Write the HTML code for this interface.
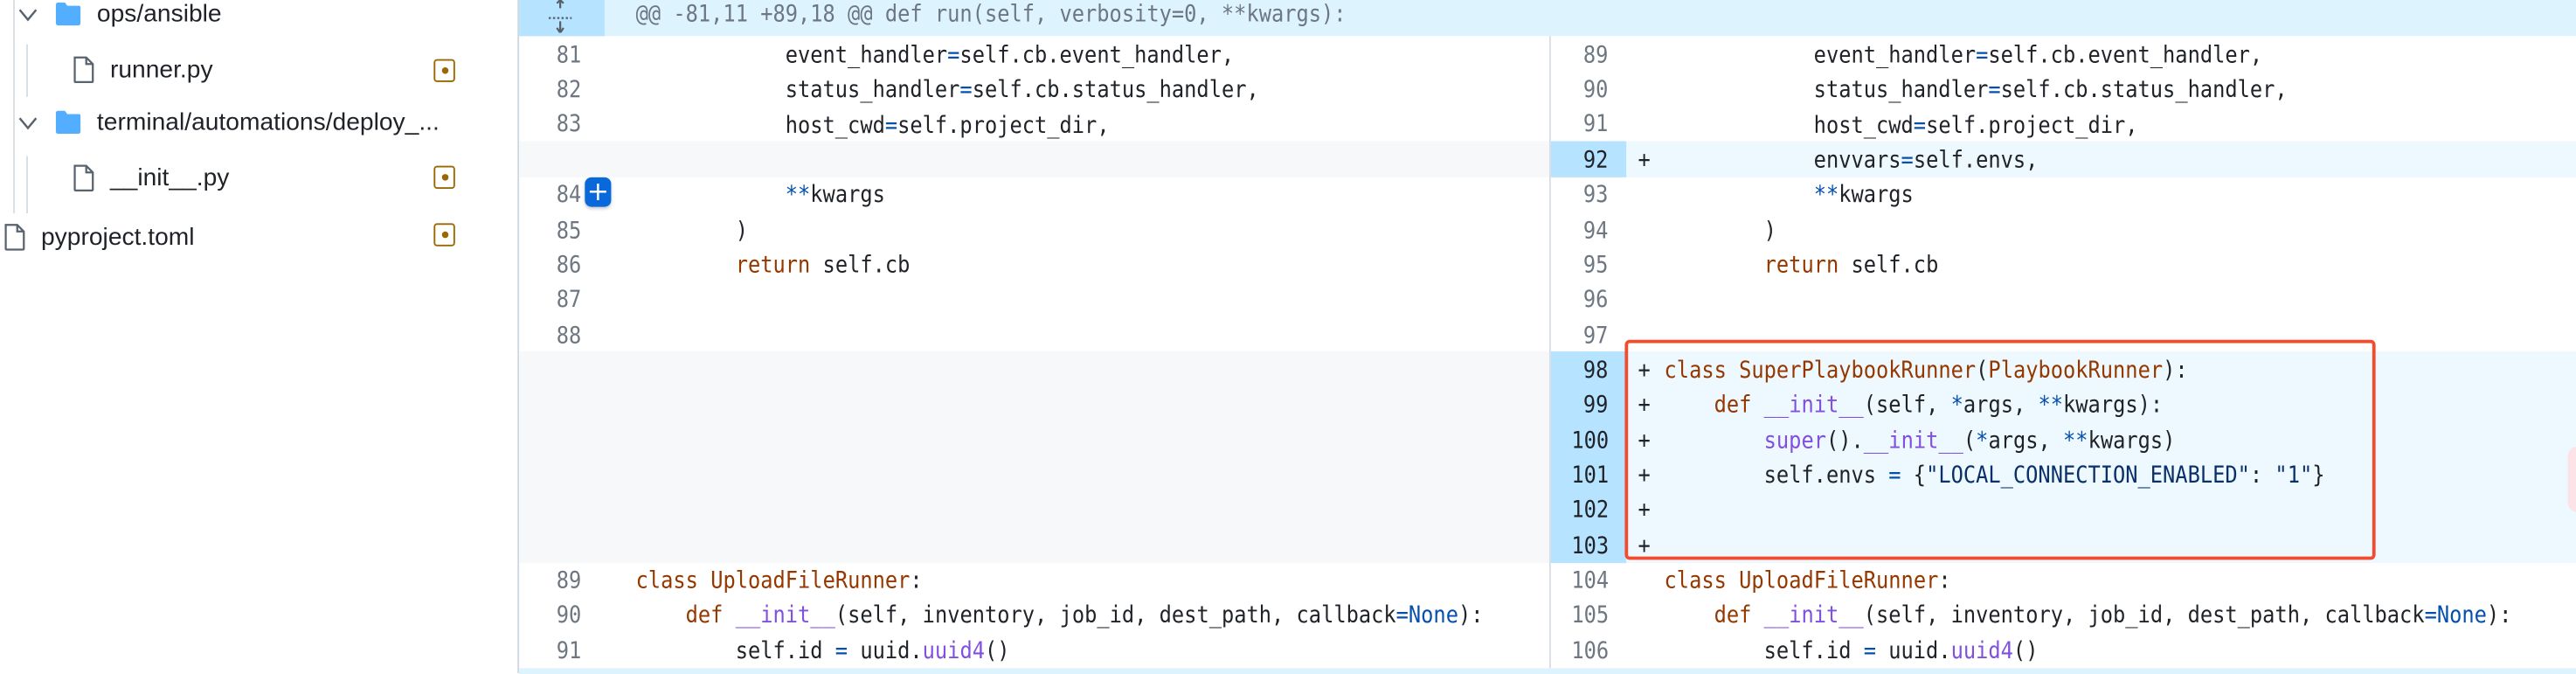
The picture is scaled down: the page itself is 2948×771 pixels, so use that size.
<!DOCTYPE html>
<html><head><meta charset="utf-8">
<style>
html,body{margin:0;padding:0;background:#fff;width:2948px;height:770px;overflow:hidden}
#w{position:absolute;left:0;top:0;width:1568px;height:410px;transform:scale(1.8801,1.878);transform-origin:0 0;background:#fff;font-family:"DejaVu Sans Mono","Liberation Mono",monospace}
.a{position:absolute}
.side{font-family:"Liberation Sans",sans-serif;font-size:15px;color:#1f2328}
.row{position:absolute;height:21.35px;line-height:21.35px;font-size:14px;white-space:pre;color:#1f2328}
.code{display:inline-block;transform:scaleX(.9);transform-origin:0 50%;position:relative;top:1.5px}
.ln{position:absolute;text-align:right;color:#6e7781;font-size:14px}
.ln div{height:21.35px;line-height:21.35px}
.ln span{display:inline-block;transform:scaleX(.9);transform-origin:100% 50%;position:relative;top:1.5px}
.k{color:#953800}.p{color:#8250df}.b{color:#0550ae}.s{color:#0a3069}
.badge{position:absolute;width:11px;height:12px;border:1.5px solid #9a6700;border-radius:2px}
.badge:after{content:"";position:absolute;left:3.5px;top:4px;width:4px;height:4px;border-radius:50%;background:#9a6700}
</style></head><body><div id="w">

<!-- sidebar -->
<div class="a" style="left:315px;top:0;width:1px;height:410px;background:#d0d7de"></div>
<div class="a" style="left:8px;top:0;width:1px;height:130px;background:#d8dee4"></div>
<div class="a" style="left:16px;top:27px;width:1px;height:32px;background:#d8dee4"></div>
<div class="a" style="left:16px;top:95px;width:1px;height:35px;background:#d8dee4"></div>

<svg class="a" style="left:10px;top:2px" width="14" height="14" viewBox="0 0 14 14"><path d="M2 4 L7 10 L12 4" fill="none" stroke="#59636e" stroke-width="1.3"/></svg>
<svg class="a" style="left:33px;top:1px" width="17" height="15" viewBox="0 0 17 15"><path d="M1 2 Q1 0.5 2.5 0.5 H6.5 L8 2.5 H15 Q16 2.5 16 3.5 V13 Q16 14.5 14.5 14.5 H2.5 Q1 14.5 1 13Z" fill="#54aeff"/></svg>
<div class="a side" style="left:59px;top:0px;line-height:17px">ops/ansible</div>

<svg class="a" style="left:44px;top:34px" width="14" height="17" viewBox="0 0 14 17"><path d="M1.5 1 H8.5 L12.5 5 V15.5 Q12.5 16 12 16 H2 Q1.5 16 1.5 15.5Z M8.5 1 V5 H12.5" fill="none" stroke="#59636e" stroke-width="1.2"/></svg>
<div class="a side" style="left:67px;top:34px;line-height:17px">runner.py</div>
<div class="badge" style="left:264px;top:36px"></div>

<svg class="a" style="left:10px;top:68px" width="14" height="14" viewBox="0 0 14 14"><path d="M2 4 L7 10 L12 4" fill="none" stroke="#59636e" stroke-width="1.3"/></svg>
<svg class="a" style="left:33px;top:67px" width="17" height="15" viewBox="0 0 17 15"><path d="M1 2 Q1 0.5 2.5 0.5 H6.5 L8 2.5 H15 Q16 2.5 16 3.5 V13 Q16 14.5 14.5 14.5 H2.5 Q1 14.5 1 13Z" fill="#54aeff"/></svg>
<div class="a side" style="left:59px;top:66px;line-height:17px">terminal/automations/deploy_...</div>

<svg class="a" style="left:44px;top:100px" width="14" height="17" viewBox="0 0 14 17"><path d="M1.5 1 H8.5 L12.5 5 V15.5 Q12.5 16 12 16 H2 Q1.5 16 1.5 15.5Z M8.5 1 V5 H12.5" fill="none" stroke="#59636e" stroke-width="1.2"/></svg>
<div class="a side" style="left:67px;top:100px;line-height:17px">__init__.py</div>
<div class="badge" style="left:264px;top:101px"></div>

<svg class="a" style="left:2px;top:136px" width="14" height="17" viewBox="0 0 14 17"><path d="M1.5 1 H8.5 L12.5 5 V15.5 Q12.5 16 12 16 H2 Q1.5 16 1.5 15.5Z M8.5 1 V5 H12.5" fill="none" stroke="#59636e" stroke-width="1.2"/></svg>
<div class="a side" style="left:25px;top:136px;line-height:17px">pyproject.toml</div>
<div class="badge" style="left:264px;top:136px"></div>

<!-- hunk header -->
<div class="a" style="left:316px;top:0;width:1252px;height:22.3px;background:#ddf4ff"></div>
<div class="a" style="left:316px;top:0;width:52px;height:22.3px;background:#b6e3ff"></div>
<svg class="a" style="left:331px;top:0px" width="20" height="20" viewBox="0 0 20 20"><path d="M10 0 V5 M8 2 L10 0 L12 2 M10 13 V20 M8 17 L10 20 L12 17" fill="none" stroke="#57606a" stroke-width="1.2"/><path d="M3 11 H17" stroke="#57606a" stroke-width="1.2" stroke-dasharray="1.3 1.3"/></svg>
<div class="row" style="left:387px;top:0;height:22px;line-height:18px;color:#6e7781"><span class="code" style="top:0">@@ -81,11 +89,18 @@ def run(self, verbosity=0, **kwargs):</span></div>

<!-- pane divider -->
<div class="a" style="left:943px;top:22px;width:1px;height:385px;background:#d8dee4"></div>

<!-- backgrounds -->
<div class="a" style="left:316px;top:86.35px;width:627px;height:21.35px;background:#f6f8fa"></div>
<div class="a" style="left:944px;top:86.35px;width:46px;height:21.35px;background:#b6e3ff"></div>
<div class="a" style="left:990px;top:86.35px;width:578px;height:21.35px;background:#eef8ff"></div>
<div class="a" style="left:316px;top:214.45px;width:627px;height:128.1px;background:#f6f8fa"></div>
<div class="a" style="left:944px;top:214.45px;width:46px;height:128.1px;background:#b6e3ff"></div>
<div class="a" style="left:990px;top:214.45px;width:578px;height:128.1px;background:#eef8ff"></div>
<div class="a" style="left:316px;top:406.6px;width:1252px;height:4px;background:#ddf4ff"></div>

<!-- line numbers left -->
<div class="ln" style="left:316px;top:22.3px;width:38px"><div><span>81</span></div><div><span>82</span></div><div><span>83</span></div><div></div><div><span>84</span></div><div><span>85</span></div><div><span>86</span></div><div><span>87</span></div><div><span>88</span></div><div></div><div></div><div></div><div></div><div></div><div></div><div><span>89</span></div><div><span>90</span></div><div><span>91</span></div></div>
<div class="a" style="left:356px;top:108px;width:16px;height:18px;background:#0969da;border-radius:4px;color:#fff;font-family:'DejaVu Sans',sans-serif;font-size:16px;line-height:17px;text-align:center;box-shadow:0 1px 2px rgba(0,0,0,.2)">+</div>

<!-- line numbers right -->
<div class="ln" style="left:944px;top:22.3px;width:35px"><div><span>89</span></div><div><span>90</span></div><div><span>91</span></div><div><span style="color:#1f2328">92</span></div><div><span>93</span></div><div><span>94</span></div><div><span>95</span></div><div><span>96</span></div><div><span>97</span></div><div><span style="color:#1f2328">98</span></div><div><span style="color:#1f2328">99</span></div><div><span style="color:#1f2328">100</span></div><div><span style="color:#1f2328">101</span></div><div><span style="color:#1f2328">102</span></div><div><span style="color:#1f2328">103</span></div><div><span>104</span></div><div><span>105</span></div><div><span>106</span></div></div>

<!-- left code -->
<div class="row" style="left:387px;top:22.3px"><span class="code">            event_handler<span class="b">=</span>self.cb.event_handler,</span></div>
<div class="row" style="left:387px;top:43.65px"><span class="code">            status_handler<span class="b">=</span>self.cb.status_handler,</span></div>
<div class="row" style="left:387px;top:65px"><span class="code">            host_cwd<span class="b">=</span>self.project_dir,</span></div>
<div class="row" style="left:387px;top:107.7px"><span class="code">            <span class="b">**</span>kwargs</span></div>
<div class="row" style="left:387px;top:129.05px"><span class="code">        )</span></div>
<div class="row" style="left:387px;top:150.4px"><span class="code">        <span class="k">return</span> self.cb</span></div>
<div class="row" style="left:387px;top:342.55px"><span class="code"><span class="k">class</span> <span class="k">UploadFileRunner</span>:</span></div>
<div class="row" style="left:387px;top:363.9px"><span class="code">    <span class="k">def</span> <span class="p">__init__</span>(self, inventory, job_id, dest_path, callback<span class="b">=None</span>):</span></div>
<div class="row" style="left:387px;top:385.25px"><span class="code">        self.id <span class="b">=</span> uuid.<span class="p">uuid4</span>()</span></div>

<!-- right code -->
<div class="row" style="left:1013px;top:22.3px"><span class="code">            event_handler<span class="b">=</span>self.cb.event_handler,</span></div>
<div class="row" style="left:1013px;top:43.65px"><span class="code">            status_handler<span class="b">=</span>self.cb.status_handler,</span></div>
<div class="row" style="left:1013px;top:65px"><span class="code">            host_cwd<span class="b">=</span>self.project_dir,</span></div>
<div class="row" style="left:1013px;top:86.35px"><span class="code">            envvars<span class="b">=</span>self.envs,</span></div>
<div class="row" style="left:1013px;top:107.7px"><span class="code">            <span class="b">**</span>kwargs</span></div>
<div class="row" style="left:1013px;top:129.05px"><span class="code">        )</span></div>
<div class="row" style="left:1013px;top:150.4px"><span class="code">        <span class="k">return</span> self.cb</span></div>
<div class="row" style="left:1013px;top:214.45px"><span class="code"><span class="k">class</span> <span class="k">SuperPlaybookRunner</span>(<span class="k">PlaybookRunner</span>):</span></div>
<div class="row" style="left:1013px;top:235.8px"><span class="code">    <span class="k">def</span> <span class="p">__init__</span>(self, <span class="b">*</span>args, <span class="b">**</span>kwargs):</span></div>
<div class="row" style="left:1013px;top:257.15px"><span class="code">        <span class="p">super</span>().<span class="p">__init__</span>(<span class="b">*</span>args, <span class="b">**</span>kwargs)</span></div>
<div class="row" style="left:1013px;top:278.5px"><span class="code">        self.envs <span class="b">=</span> {<span class="s">"LOCAL_CONNECTION_ENABLED"</span>: <span class="s">"1"</span>}</span></div>
<div class="row" style="left:1013px;top:342.55px"><span class="code"><span class="k">class</span> <span class="k">UploadFileRunner</span>:</span></div>
<div class="row" style="left:1013px;top:363.9px"><span class="code">    <span class="k">def</span> <span class="p">__init__</span>(self, inventory, job_id, dest_path, callback<span class="b">=None</span>):</span></div>
<div class="row" style="left:1013px;top:385.25px"><span class="code">        self.id <span class="b">=</span> uuid.<span class="p">uuid4</span>()</span></div>

<!-- plus markers -->
<div class="row" style="left:997px;top:86.35px"><span class="code">+</span></div>
<div class="row" style="left:997px;top:214.45px;line-height:21.35px"><span class="code">+<br>+<br>+<br>+<br>+<br>+</span></div>

<!-- red box -->
<div class="a" style="left:989px;top:207px;width:453px;height:130px;border:2px solid #f34b2b;border-radius:3px"></div>

<div class="a" style="left:1563px;top:272px;width:12px;height:40px;border-radius:6px;background:#fbe3e7"></div>
</div></body></html>
